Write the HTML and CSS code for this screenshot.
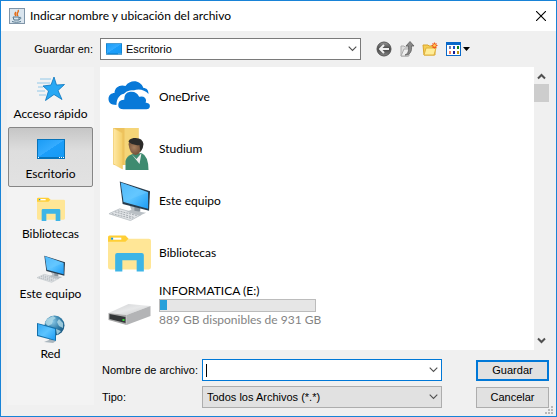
FILE: index.html
```html
<!DOCTYPE html>
<html lang="es">
<head>
<meta charset="utf-8">
<meta name="viewport" content="width=device-width, initial-scale=1">
<title>Indicar nombre y ubicación del archivo</title>
<link rel="stylesheet" href="styles.css">
</head>
<body>
<svg class="defs" width="0" height="0" aria-hidden="true">
  <defs>
    <linearGradient id="blue" x1="0" y1="0" x2="1" y2="1"><stop offset="0" stop-color="#1b9cf5"/><stop offset=".5" stop-color="#35acff"/><stop offset=".51" stop-color="#1c9efa"/><stop offset="1" stop-color="#159af5"/></linearGradient>
    <linearGradient id="screen" x1="0" y1="0" x2="1" y2="1"><stop offset="0" stop-color="#35a8f3"/><stop offset=".5" stop-color="#5cc4ff"/><stop offset="1" stop-color="#1c9bf5"/></linearGradient>
    <linearGradient id="fold" x1="0" y1="0" x2="1" y2="0"><stop offset="0" stop-color="#ffe9a6"/><stop offset="1" stop-color="#f4ce67"/></linearGradient>
    <radialGradient id="globe-fill" cx=".4" cy=".3" r=".8"><stop offset="0" stop-color="#8ccae8"/><stop offset=".5" stop-color="#347fa9"/><stop offset="1" stop-color="#124d76"/></radialGradient>
    <linearGradient id="metal" x1="0" y1="0" x2="1" y2="1"><stop offset="0" stop-color="#d0d1d3"/><stop offset=".5" stop-color="#e7e8e9"/><stop offset="1" stop-color="#c5c6c8"/></linearGradient>
    <radialGradient id="skin" cx=".4" cy=".5" r=".7"><stop offset="0" stop-color="#a9805f"/><stop offset="1" stop-color="#5f3f2b"/></radialGradient>
    <linearGradient id="gray-ball" x1="0" y1="0" x2="0" y2="1"><stop offset="0" stop-color="#999"/><stop offset=".5" stop-color="#444"/><stop offset="1" stop-color="#888"/></linearGradient>
  </defs>
  <symbol id="desktop" viewBox="0 0 28 20"><path fill="#0873b9" d="M0 0h28v20H0z"/><path fill="url(#blue)" d="M1 1h26v17H1z"/><path fill="#fff" d="M1 18h1v1H1zM22 18h1v1h-1zM24 18h1v1h-1zM26 18h1v1h-1z"/></symbol>
  <symbol id="library" viewBox="0 0 42 36"><path fill="#ffcf36" d="M0 2.500Q0 1 1.500 1H17l4 4v4H0z"/><path fill="#fff" d="M3 3h10v2H3z"/><path fill="#1b95d1" d="M3 3h2v2H3z"/><path fill="#ffe696" d="M0 7h17l3-3h20q2 0 2 2v26q0 2-2 2H2q-2 0-2-2z"/><path fill="#3db5e6" d="M7 36V20q0-2 2-2h24q2 0 2 2v16h-7V25H14v11z"/></symbol>
  <symbol id="computer" viewBox="0 0 44 42">
    <path fill="#e1e4e7" stroke="#c0c5c9" d="M1 34l11-5 22 6-11 6z"/><path stroke="#a3a9ae" stroke-dasharray="2 1" d="M4 34l21 5M7 32l20 6M10 31l20 5" fill="none"/>
    <path fill="#b9bfc4" d="M22 25l10 3v4l7 1-7 3-13-4 5-2z"/><path fill="#8b949c" d="M27 27l6 1v4l-6-1z"/>
    <path fill="#273c4e" d="M12 1l31 10-1 20-27-7z"/><path fill="url(#screen)" d="M13 2l28 10v17l-25-7z"/><path fill="#6bcaff" opacity=".5" d="M13 2l28 10-25 10z"/>
  </symbol>
  <symbol id="chevron" viewBox="0 0 9 6"><path d="M.7.700 4.500 4.500 8.300.7" fill="none" stroke="#505050" stroke-width="1.100"/></symbol>
  <symbol id="scroll" viewBox="0 0 9 7"><path d="M1 5.500 4.500 2 8 5.500" fill="none" stroke="#505050" stroke-width="2"/></symbol>
</svg>
<main class="window">
  <header class="titlebar">
    <svg class="app-icon" viewBox="0 0 16 16" aria-hidden="true"><rect x=".5" y=".5" width="15" height="15" fill="#dae5ee" stroke="#8095a8"/><path d="M9 2c2 2-3 3 0 6M7 4c-2 2-1 3 0 4" fill="none" stroke="#e26b16" stroke-width="1.400"/><path d="M4 9h6v3H5zM10 9.500c3-1 2 2 0 2M3 13.500c3 1 6 1 9 0" fill="none" stroke="#55788f"/></svg>
    <h1>Indicar nombre y ubicación del archivo</h1>
    <button class="close" type="button" aria-label="Cerrar"><svg viewBox="0 0 10 10"><path d="M0 0l10 10M10 0 0 10" stroke="#000" stroke-width="1.100"/></svg></button>
  </header>
  <div class="toolbar">
    <label for="place">Guardar en:</label>
    <div class="combo place"><select id="place"><option>Escritorio</option></select><svg class="combo-icon"><use href="#desktop"/></svg><svg class="arrow"><use href="#chevron"/></svg></div>
    <div class="tools">
      <button type="button" aria-label="Atrás"><svg viewBox="0 0 16 16"><circle cx="8" cy="8" r="7" fill="url(#gray-ball)" stroke="#555"/><path d="M13 8H4m4-4L4 8l4 4" fill="none" stroke="#f0f0f0" stroke-width="2"/></svg></button>
      <button type="button" aria-label="Subir un nivel"><svg viewBox="0 0 16 16"><path d="M2 5h3l1 1h4v9H2z" fill="#ddd" stroke="#aaa"/><path d="M2 15l3-7h6l-2 7z" fill="#eee" stroke="#aaa"/><path d="M6 14c3-1 4-4 3.500-9H7l4-4.500L15 5h-2.500c.5 5-1 9-6.500 9z" fill="#888" stroke="#555" stroke-width=".7"/></svg></button>
      <button type="button" aria-label="Nueva carpeta"><svg viewBox="0 0 16 16"><path d="M1 4h5l1 1h6v9H2z" fill="#f5ce55" stroke="#d9a52e"/><path d="M2 14l2-7h10l-2 7z" fill="#ffed99" stroke="#e0b23d"/><path d="M12.500 1.500v6M9.500 4.500h6M10.500 2.500l4 4M14.500 2.500l-4 4" stroke="#f05a1c" stroke-width="1.200"/><circle cx="12.500" cy="4.500" r="1.300" fill="#ffd55e"/></svg></button>
      <button class="view" type="button" aria-label="Menú Ver"><svg viewBox="0 0 16 16"><path fill="#0868c9" d="M1 1h15v14H1z"/><path fill="#fff" d="M2 4h13v10H2z"/><path fill="#777faa" d="M4 5h2v3H4z"/><path fill="#1d53c2" d="M8 5h2v3H8z"/><path fill="#12851d" d="M12 5h2v3h-2z"/><path fill="#f57d61" d="M4 10h2v3H4z"/><path fill="#151d95" d="M8 10h2v3H8z"/><path fill="#bd9418" d="M12 10h2v3h-2z"/></svg><svg class="caret" viewBox="0 0 7 4"><path d="M0 0h7L3.500 4z"/></svg></button>
    </div>
  </div>
  <div class="content">
    <nav class="places" aria-label="Ubicaciones">
      <button type="button"><svg viewBox="0 0 28 28"><path fill="#28a8f4" stroke="#0874bd" stroke-width=".8" d="M17 2l2.500 8 8-.5-6.500 6 4 9-8-5-8.500 6 3-9.500L6 11l8-1z"/><path d="M3 4h11M0 8h13M1 12h5M0 16h8M2 20h7" stroke="#79bce4" stroke-width=".8"/></svg>Acceso rápido</button>
      <button class="selected" type="button" aria-pressed="true"><svg><use href="#desktop"/></svg>Escritorio</button>
      <button type="button"><svg><use href="#library"/></svg>Bibliotecas</button>
      <button class="computer-place" type="button"><svg><use href="#computer"/></svg>Este equipo</button>
      <button type="button"><svg viewBox="0 0 28 28"><circle cx="17.500" cy="10.500" r="10" fill="url(#globe-fill)"/><path d="M10 4l6-3 3 2-3 2-1 4-4 2-3-3zM22 4l4 4v5l-4-2-2-4zM19 14l5 2-4 4z" fill="#b4dce9" opacity=".8"/><path d="M12 22l4 1v2l3 1-3 2-9-1 5-2z" fill="#aab6be"/><path fill="#1470aa" d="M0 8l19 5v13L0 21z"/><path fill="url(#screen)" d="M1 9l17 5v11L1 20z"/></svg>Red</button>
    </nav>
    <section class="work">
      <div class="pane">
        <ul class="files">
          <li><svg viewBox="0 0 42 42"><path fill="#0879d8" d="M8 29C2 29 0 26 0 23c0-4 3-6 6-6 0-6 6-9 11-7 5-7 15-6 18 2 3 0 5 2 5 6-5-6-15-6-19 0-8-2-13 3-13 11z"/><path fill="#0879d8" stroke="#fff" stroke-width="1.500" d="M15 34c-8 0-8-10 0-11 0-9 12-11 16-3 6-1 8 3 7 6 6 1 5 8 0 8z"/></svg><span>OneDrive</span></li>
          <li><svg viewBox="0 0 42 42"><path fill="#edc25d" d="M5 0h25v37H5z"/><path fill="#f5d578" d="M16 0h14v37H16z"/><path fill="url(#fold)" stroke="#efc75f" stroke-width=".5" d="M5 0l9 5v36l-9-5z"/><path fill="#3f8b70" d="M17 42V33q1-5 7-7l9-1q7 3 7 17z"/><path fill="#eee" d="M23 26l5 5 5-6-2 11z"/><path fill="url(#skin)" d="M20 16q1-4 6-4l8 2q0 12-7 13-6-1-7-11z"/><path fill="#2c2b2a" d="M20 14q0-3 5-4 9-1 10 6 0 4-3 8l-1-7q-6 1-11-3z"/></svg><span>Studium</span></li>
          <li><svg><use href="#computer"/></svg><span>Este equipo</span></li>
          <li><svg><use href="#library"/></svg><span>Bibliotecas</span></li>
          <li><svg viewBox="0 0 42 42"><path fill="url(#metal)" d="M0 29l20-9 22 2-24 9z"/><path fill="#b3b4b6" d="M18 31l24-9v10L18 41z"/><path fill="#aaa" d="M0 29l18 2v10L0 36z"/><path fill="#333638" d="M1 30l16 3v6L1 35z"/><path fill="#36dc39" d="M14 35h2v2h-2z"/></svg><div class="drive"><span>INFORMATICA (E:)</span><div class="usage"><meter min="0" max="931" value="42" aria-label="Espacio usado">42 GB</meter></div><span class="free">889 GB disponibles de 931 GB</span></div></li>
        </ul>
        <div class="scrollbar" aria-hidden="true"><svg><use href="#scroll"/></svg><div class="thumb"></div><svg class="down"><use href="#scroll"/></svg></div>
      </div>
      <form class="save">
        <label for="name">Nombre de archivo:</label>
        <div class="combo name"><input id="name" type="text"><i class="cursor"></i><svg class="arrow"><use href="#chevron"/></svg></div>
        <button class="primary" type="button">Guardar</button>
        <label for="type">Tipo:</label>
        <div class="combo type"><select id="type"><option>Todos los Archivos (*.*)</option></select><svg class="arrow"><use href="#chevron"/></svg></div>
        <button type="button">Cancelar</button>
      </form>
    </section>
  </div>
  <svg class="grip" viewBox="0 0 8 8" aria-hidden="true"><path fill="#b8b8b8" d="M6 0h2v2H6zM3 3h2v2H3zM6 3h2v2H6zM0 6h2v2H0zM3 6h2v2H3zM6 6h2v2H6z"/></svg>
</main>
</body>
</html>
```
FILE: styles.css
```css
* { box-sizing: border-box; }
body { margin: 0; font: 12px/16px Lato, sans-serif; color: #000; }
button, input, select { font: inherit; color: inherit; margin: 0; padding: 0; border: 0; border-radius: 0; }
button { background: none; }
svg { display: block; flex: none; }
.defs { position: absolute; }
.window { position: relative; display: flex; flex-direction: column; min-height: 100vh; background: #f0f0f0; border: 1px solid #1883d7; }
.titlebar { display: flex; align-items: center; height: 30px; padding: 0 10px 0 8px; background: #fff; }
.app-icon { width: 16px; height: 16px; margin-right: 5px; }
h1 { flex: 1; margin: 0; font-size: 12px; font-weight: 400; }
.close svg { width: 10px; height: 10px; }
.toolbar { display: flex; align-items: center; height: 36px; padding-right: 86px; }
.toolbar > label { width: 99px; padding-right: 7px; text-align: right; }
.toolbar, .save { font-family: "Liberation Sans", sans-serif; font-size: 11px; }
.combo { position: relative; height: 22px; }
.combo select, .combo input { appearance: none; width: 100%; height: 100%; padding: 0 20px 0 4px; border: 1px solid #7a7a7a; background: #fff; outline: 0; }
.combo.place { flex: 1; }
.combo.place select { padding-left: 25px; }
.combo.name input { border-color: #0078d7; }
.combo.type select { border-color: #adadad; background: #e1e1e1; }
.combo-icon { position: absolute; left: 6px; top: 5px; width: 16px; height: 12px; pointer-events: none; }
.arrow { position: absolute; right: 4px; top: 8px; width: 9px; height: 6px; pointer-events: none; }
.cursor { position: absolute; left: 4px; top: 5px; width: 1px; height: 13px; background: #000; }
.tools { display: flex; gap: 7px; margin-left: 15px; }
.tools svg { width: 16px; height: 16px; }
.tools .view { display: flex; align-items: center; gap: 2px; }
.tools .caret { width: 7px; height: 4px; }
.content { display: flex; flex: 1; gap: 6px; padding: 0 7px 8px 6px; }
.places { width: 87px; margin-bottom: 3px; padding: 0 1px; background: #f3f3f3; flex: none; }
.places button { display: flex; flex-direction: column; align-items: center; justify-content: space-between; width: 100%; height: 60px; padding: 8px 0 5px; white-space: nowrap; }
.places svg { width: 28px; height: 28px; }
.places .selected { border: 1px solid #868686; border-radius: 2px; background: linear-gradient(#c6c6c6, #dedede 40%, #e2e2e2); padding: 7px 0 4px; }
.places .computer-place svg { width: 32px; }
.work { display: flex; flex: 1; flex-direction: column; min-width: 0; }
.pane { display: flex; flex: 1; background: #fff; }
.files { flex: 1; margin: 0; padding: 4px 8px; list-style: none; }
.files li { display: flex; align-items: center; gap: 8px; height: 52px; }
.files svg { width: 43px; height: 42px; }
.drive { white-space: nowrap; }
.drive span { display: block; }
.usage { width: 157px; height: 13px; border: 1px solid #bcbcbc; overflow: hidden; background: #e6e6e6; }
meter { appearance: none; display: block; width: 100%; height: 20px; }
meter::-webkit-meter-inner-element { display: block; height: 20px; }
meter::-webkit-meter-bar { height: 20px; border: 0; border-radius: 0; background: #e6e6e6; }
meter::-webkit-meter-optimum-value { background: #26a0da; }
.free { color: #838383; }
.scrollbar { display: flex; flex-direction: column; align-items: center; width: 15px; padding: 6px 0; background: #f0f0f0; }
.scrollbar svg { width: 9px; height: 7px; }
.thumb { width: 15px; height: 18px; margin-top: 4px; background: #cdcdcd; }
.scrollbar .down { margin-top: auto; transform: rotate(180deg); }
.save { display: grid; grid-template-columns: 98px 1fr 73px; column-gap: 4px; row-gap: 5px; align-items: center; margin-top: 9px; }
.save label { padding-left: 2px; white-space: nowrap; }
.save .combo { margin-right: 30px; }
.save button { height: 21px; background: #e1e1e1; border: 1px solid #adadad; }
.save .primary { border: 2px solid #0078d7; }
.grip { position: absolute; right: 3px; bottom: 2px; width: 8px; height: 8px; }
```
